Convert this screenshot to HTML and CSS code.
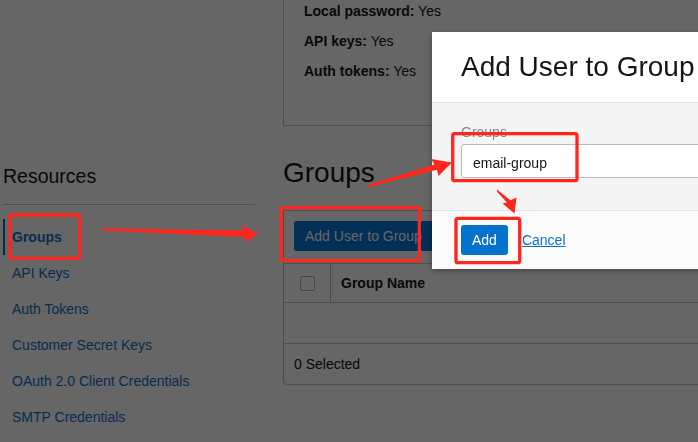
FILE: index.html
```html
<!DOCTYPE html>
<html lang="en">
<head>
<meta charset="utf-8">
<title>Add User to Group</title>
<link rel="stylesheet" href="styles.css">
</head>
<body>
<div class="page">
  <div class="spacer"></div>
  <section class="card">
    <p><b>Local password:</b> Yes</p>
    <p><b>API keys:</b> Yes</p>
    <p><b>Auth tokens:</b> Yes</p>
  </section>

  <aside class="sidebar">
    <h2 class="side-title">Resources</h2>
    <nav class="side-nav">
      <a class="nav-item active">Groups</a>
      <a class="nav-item">API Keys</a>
      <a class="nav-item">Auth Tokens</a>
      <a class="nav-item">Customer Secret Keys</a>
      <a class="nav-item">OAuth 2.0 Client Credentials</a>
      <a class="nav-item">SMTP Credentials</a>
    </nav>
  </aside>

  <main class="main">
    <h1 class="main-title">Groups</h1>
    <div class="panel">
      <div class="toolbar">
        <button class="btn btn-primary" type="button">Add User to Group</button>
      </div>
      <div class="thead">
        <div class="cell-check"><span class="checkbox"></span></div>
        <div class="cell-name">Group Name</div>
      </div>
      <div class="tbody-empty"></div>
      <div class="tfoot">0 Selected</div>
    </div>
  </main>
</div>

<div class="overlay"></div>

<div class="modal">
  <div class="modal-header">Add User to Group</div>
  <div class="modal-body">
    <label class="field-label" for="grp">Groups</label>
    <input class="field-input" id="grp" type="text" value="email-group">
  </div>
  <div class="modal-footer">
    <button class="btn btn-primary" type="button">Add</button>
    <a class="link-cancel">Cancel</a>
  </div>
</div>

<svg class="annotations" width="698" height="442" viewBox="0 0 698 442" xmlns="http://www.w3.org/2000/svg">
  <g fill="none" stroke="#fe261d" stroke-width="3.3">
    <rect x="10" y="215" width="69.7" height="43.3" rx="2"/>
    <rect x="281.3" y="207.7" width="138" height="53" rx="2"/>
    <rect x="452.7" y="133.7" width="124.3" height="47" rx="2"/>
    <rect x="456" y="218.3" width="63.7" height="44.4" rx="2"/>
  </g>
  <g fill="#fe261d">
    <polygon points="102,228.3 243,230.6 242,225 258.5,234 245.5,242 244,237 102,230.6"/>
    <polygon points="368,184.8 434.5,164.5 431,159 452,162.5 438.5,176 437,169.8 369,187"/>
    <polygon points="497,189.6 510.5,200.3 516.5,197.5 514.5,213.5 502.5,203.5 507,202.6 496.8,191.6"/>
  </g>
</svg>
</body>
</html>
```

FILE: styles.css
```css
* { box-sizing: border-box; }

html, body {
  margin: 0;
  padding: 0;
}

body {
  width: 698px;
  height: 442px;
  overflow: hidden;
  background: #ffffff;
  font-family: "Liberation Sans", Arial, Helvetica, sans-serif;
  font-size: 14px;
  color: #161513;
}

/* ---------- underlying page ---------- */
.page {
  display: grid;
  grid-template-columns: 283px 620px;
  margin-top: -24px;
}

.card {
  border: 1px solid #c2c2c2;
  padding: 19px 20px 39px 20px;
}

.card p {
  margin: 0;
  line-height: 30px;
  font-size: 14px;
}

.sidebar {
  margin-left: 3px;
  width: 252px;
}

.side-title {
  margin: 38px 0 0 0;
  padding-bottom: 16px;
  font-size: 19.5px;
  line-height: 24px;
  font-weight: normal;
  border-bottom: 1px solid #c4c4c4;
}

.side-nav {
  display: flex;
  flex-direction: column;
  margin-top: 14px;
}

.nav-item {
  display: block;
  height: 36px;
  line-height: 36px;
  border-left: 2px solid transparent;
  padding-left: 7px;
  color: #1270c4;
  font-size: 14px;
  white-space: nowrap;
}

.nav-item.active {
  border-left-color: #1268b8;
  font-weight: bold;
  color: #1672c6;
}

.main-title {
  margin: 31px 0 21px 0;
  font-size: 28px;
  line-height: 32px;
  font-weight: normal;
}

.panel {
  border: 1px solid #c0c0c0;
  border-radius: 0 0 0 4px;
}

.toolbar {
  padding: 10px 10px 12px 10px;
}

.btn {
  height: 30px;
  border: none;
  border-radius: 3px;
  font-family: inherit;
  font-size: 14px;
  color: #ffffff;
  padding: 0 11px;
}

.btn-primary {
  background: #0577d6;
}

.thead {
  display: flex;
  height: 40px;
  border-top: 1px solid #c0c0c0;
  border-bottom: 1px solid #c0c0c0;
}

.cell-check {
  width: 47px;
  border-right: 1px solid #c0c0c0;
  display: flex;
  align-items: center;
  justify-content: center;
}

.checkbox {
  width: 15px;
  height: 15px;
  border: 1px solid #b4b4b4;
  border-radius: 2px;
  background: #fff;
}

.cell-name {
  display: flex;
  align-items: center;
  padding-left: 10px;
  font-weight: bold;
}

.tbody-empty {
  height: 41px;
  border-bottom: 1px solid #c0c0c0;
}

.tfoot {
  height: 40px;
  line-height: 40px;
  padding-left: 10px;
}

/* ---------- modal ---------- */
.overlay {
  position: fixed;
  inset: 0;
  background: rgba(0, 0, 0, 0.6);
}

.modal {
  position: fixed;
  left: 432px;
  top: 32px;
  width: 520px;
  background: #ffffff;
  box-shadow: 0 2px 6px rgba(0, 0, 0, 0.35);
}

.modal-header {
  padding: 19px 29px;
  font-size: 28px;
  line-height: 32px;
  color: #161513;
  border-bottom: 1px solid #e2e2e2;
  white-space: nowrap;
}

.modal-body {
  background: #f5f5f5;
  padding: 21px 29px 32px 29px;
}

.field-label {
  display: block;
  font-size: 14px;
  line-height: 16px;
  color: #868686;
  margin-bottom: 4px;
}

.field-input {
  display: block;
  width: 100%;
  height: 34px;
  border: 1px solid #b6babf;
  border-radius: 3px;
  background: #ffffff;
  padding: 4px 11px 0 11px;
  font-family: inherit;
  font-size: 14px;
  color: #161513;
}

.modal-footer {
  display: flex;
  align-items: center;
  gap: 14px;
  padding: 14px 29px;
  background: #fbfbfb;
  border-top: 1px solid #e2e2e2;
}

.modal-footer .btn-primary {
  background: #0572ce;
}

.link-cancel {
  color: #0572ce;
  text-decoration: underline;
  font-size: 14px;
}

/* ---------- annotations ---------- */
.annotations {
  position: fixed;
  left: 0;
  top: 0;
  pointer-events: none;
}
```
